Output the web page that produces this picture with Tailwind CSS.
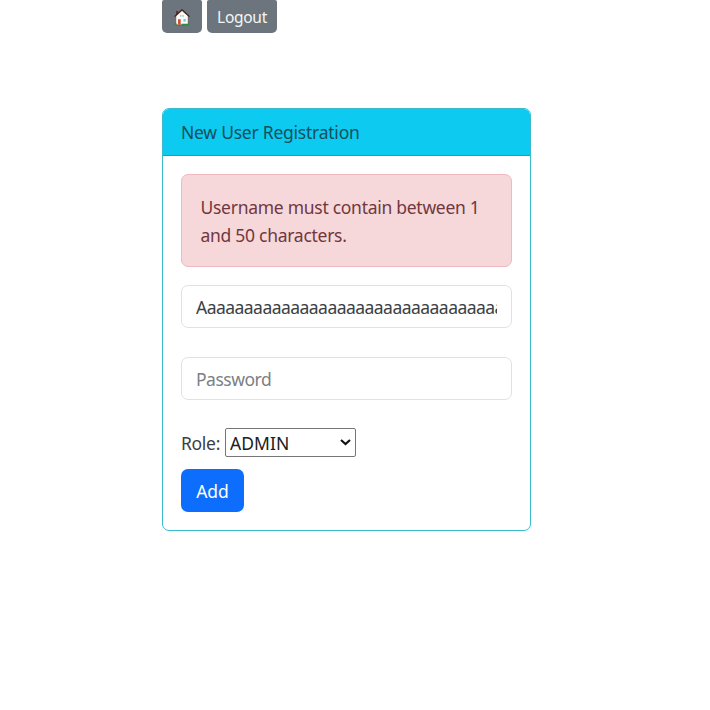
<!DOCTYPE html>
<html lang="en">
<head>
<meta charset="utf-8">
<title>New User Registration</title>
<script src="https://cdn.jsdelivr.net/npm/@tailwindcss/browser@4"></script>
</head>
<body class="h-[710px] overflow-hidden bg-white pl-[162px] font-['Noto_Sans',sans-serif] text-[17.5px] leading-[28px] text-[#3c4044]">
  <nav class="flex gap-[5px]">
    <button class="flex h-[33px] w-10 items-center justify-center rounded-t-[2px] rounded-b-[5px] bg-[#6c757d]" aria-label="Home">
      <svg class="h-[18px] w-[18px]" viewBox="0 0 18 18">
        <path d="M2.8 8 9 2.6 15.2 8v8.8H2.8z" fill="#fbfaf6" stroke="#2e3434" stroke-width=".5"/>
        <path d="M3.2 3h1.6v3.2L3.2 7.6z" fill="#5a2420"/>
        <path d="M1.5 8.6 9 1.6l7.5 7" fill="none" stroke="#4b1c1c" stroke-width="1.2" stroke-linejoin="round"/>
        <path d="M5 11.2h2.7v5.4H5z" fill="#d2502d"/>
        <path d="M10.4 11h2.4v2.6h-2.4zM7.2 7h1.2v1.8H7.2zM9.5 7h1.2v1.8H9.5z" fill="#82c5e0"/>
        <path d="M1.5 15.2h2v1.8h-2zM8.7 15.8h7.6V17H8.7z" fill="#2b8d43"/>
      </svg>
    </button>
    <button class="flex h-[33px] w-[70px] items-center justify-center rounded-t-[2px] rounded-b-[5px] bg-[#6c757d] text-[15.5px] tracking-[-0.28px] text-[#f4f5f5]">Logout</button>
  </nav>

  <main class="mt-[75px] flex h-[423px] w-[369px] flex-col overflow-hidden rounded-[7px] border border-[#3bbbd0]">
    <h1 class="h-[47px] shrink-0 border-b border-[#15a4c0] bg-[#0dcaf0] pt-[9.4px] pl-[18px] tracking-[-0.24px] text-[#15505d]">New User Registration</h1>
    <form class="flex flex-col items-start px-[18px] pt-[18px]">
      <p class="h-[93px] w-[331px] rounded-[7px] border border-[#efb9c0] bg-[#f6d7da] pt-[18.4px] pl-[18.5px] tracking-[-0.28px] text-[#70383e]">Username must contain between 1<br>and 50 characters.</p>
      <input class="mt-[18px] h-[43px] w-[331px] rounded-[7px] border border-[#dfe2e5] px-[14px] pt-[1px] tracking-[-0.53px]" value="Aaaaaaaaaaaaaaaaaaaaaaaaaaaaaaaaaaaaaaaaaaaaaaaaaaaaaaaa" aria-label="Username">
      <input class="mt-[29px] h-[43px] w-[331px] rounded-[7px] border border-[#dfe2e5] px-[14px] pt-[1px] tracking-[-0.5px] placeholder:text-[#7c8085]" type="password" placeholder="Password">
      <div class="mt-[28px] flex h-[29px] items-center">
        <label class="w-[44px] pt-[1px] tracking-[-0.3px]" for="role">Role:</label>
        <div class="relative h-[29px] w-[131px]">
          <select id="role" class="h-[29px] w-[131px] appearance-none rounded-[2px] border border-[#767676] bg-white pt-[1px] pl-[4px] leading-[24px] tracking-[0.05px] text-[#202020]"><option>ADMIN</option></select>
          <svg class="pointer-events-none absolute top-[10px] right-[5px] h-[8px] w-[11px]" viewBox="0 0 11 8" fill="none" stroke="#111" stroke-width="2.2"><path d="m1 2 4.5 4L10 2"/></svg>
        </div>
      </div>
      <button class="mt-[12px] flex h-[43px] w-[63px] items-center justify-center rounded-[7px] bg-[#0d6efd] pt-[1px] text-white">Add</button>
    </form>
  </main>
</body>
</html>
